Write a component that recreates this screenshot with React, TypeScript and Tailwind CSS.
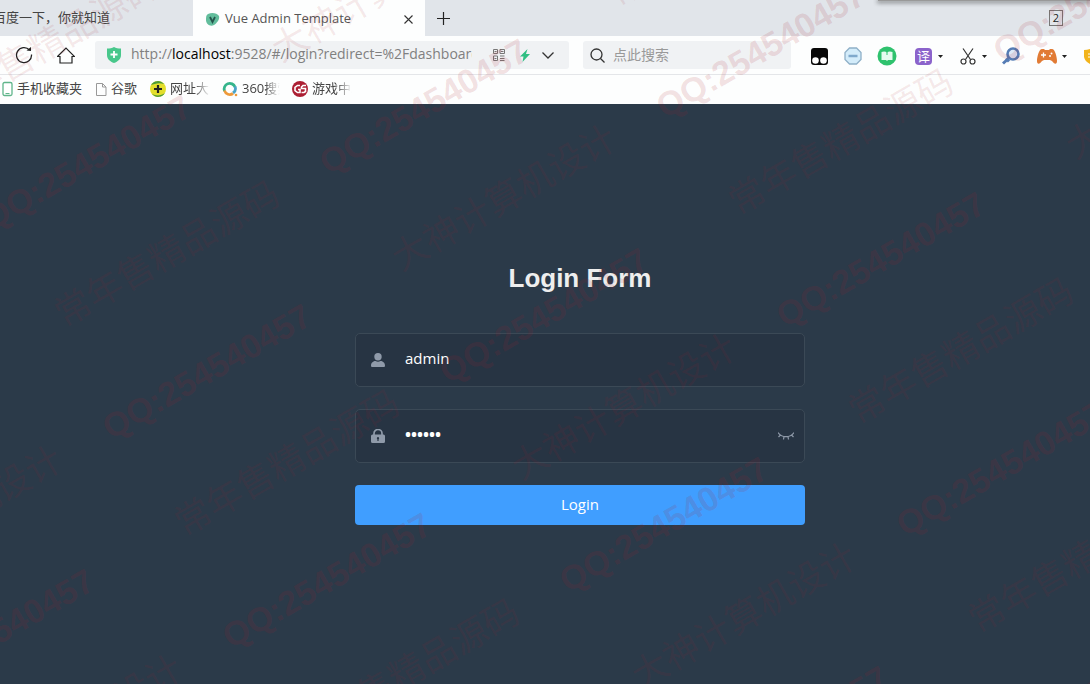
import { useState } from "react"
import type { ReactNode } from "react"

const bookmarks = [
  { label: "手机收藏夹", width: "w-[66px]", icon: <PhoneIcon /> },
  { label: "谷歌", width: "w-[27px]", icon: <PageIcon /> },
  { label: "网址大全", width: "w-10", icon: <NavSiteIcon /> },
  { label: "360搜索", width: "w-[38px]", icon: <SearchSiteIcon /> },
  { label: "游戏中心", width: "w-10", icon: <GameSiteIcon /> },
]

function PhoneIcon() {
  return (
    <svg width="11" height="16" viewBox="0 0 11 16" fill="none">
      <rect x="1" y="1.5" width="9" height="13" rx="1.5" fill="#fff" stroke="#5fb58a" strokeWidth="1.3" />
      <path d="M3.500 12.5h4" stroke="#5fb58a" />
    </svg>
  )
}

function PageIcon() {
  return (
    <svg width="12" height="16" viewBox="0 0 12 16" fill="none" stroke="#999">
      <path d="M1.5 2.5h6l3.500 3.500v8.500h-9.500zM7.500 2.500v3.500h3.500" />
    </svg>
  )
}

function NavSiteIcon() {
  return (
    <svg width="16" height="16" viewBox="0 0 16 16">
      <circle cx="8" cy="8" r="8" fill="#e3de2c" />
      <path d="M1 4a8 8 0 0 1 13-1C9 1 4 3 1 4zM2 13a8 8 0 0 0 13-1c-4 3-9 3-13 1z" fill="#4c9a3a" />
      <path d="M8 4v8M4 8h8" stroke="#222" strokeWidth="2.200" />
    </svg>
  )
}

function SearchSiteIcon() {
  return (
    <svg width="16" height="16" viewBox="0 0 16 16" fill="none" strokeWidth="2.800">
      <path d="M2.500 10A5.500 5.500 0 0 1 13 6" stroke="#35b58b" />
      <path d="M13 5.500a5.500 5.500 0 0 1-2 6.500" stroke="#4aa3c8" />
      <path d="M2.500 9.500A5.500 5.500 0 0 0 11 12.500" stroke="#ee9a3a" />
      <circle cx="14" cy="14" r="1.300" fill="#ee9a3a" />
    </svg>
  )
}

function GameSiteIcon() {
  return (
    <svg width="16" height="16" viewBox="0 0 16 16" fill="none">
      <circle cx="8" cy="8" r="8" fill="#ac1f33" />
      <path d="M8 4.500H5.500L3 6.500v3l2.500 2H8V8.500H6M14 4.500h-3L9.500 6v1.500h4v3l-1.500 1H9.500" stroke="#fff" strokeWidth="1.600" />
    </svg>
  )
}

function Caret() {
  return (
    <svg width="5" height="3" viewBox="0 0 5 3" className="shrink-0">
      <path d="M0 0h5L2.500 3z" fill="#222" />
    </svg>
  )
}

function TabBar() {
  return (
    <div className="relative flex h-9 items-stretch overflow-hidden bg-[#e1e5ea] text-[#555]">
      <button type="button" className="flex w-[193px] shrink-0 items-center overflow-hidden pl-px">
        <span className="-ml-2 whitespace-nowrap text-[13px] text-[#444]">百度一下，你就知道</span>
      </button>
      <div className="flex w-[232px] shrink-0 items-center bg-[#fdfefe] pt-0.5 pl-3">
        <svg width="15" height="15" viewBox="0 0 15 15" className="shrink-0">
          <path d="M3 2C7 0 12 1 14 4c1 3-2 7-5 9-4 2-8-1-8-5 0-3 0-5 2-6z" fill="#62bd9c" />
          <path d="M5 5l2.500 5L10 5" fill="none" stroke="#24544c" strokeWidth="1.800" />
        </svg>
        <span className="ml-[5px] flex-1 whitespace-nowrap text-left text-[13px]">Vue Admin Template</span>
        <button type="button" aria-label="Close tab" className="mr-3">
          <svg width="9" height="9" viewBox="0 0 9 9" stroke="#333" strokeWidth="1.100">
            <path d="M.5.5l8 8M8.500.5l-8 8" />
          </svg>
        </button>
      </div>
      <button type="button" aria-label="New tab" className="ml-3">
        <svg width="13" height="13" viewBox="0 0 13 13" stroke="#222" strokeWidth="1.200">
          <path d="M6.500 0v13M0 6.500h13" />
        </svg>
      </button>
      <button
        type="button"
        className="mr-[27px] ml-auto h-4 w-3.5 self-center border border-[#777] text-[11px] leading-[14px] text-[#222]"
      >
        2
      </button>
      <div className="absolute top-0 right-0 h-px w-[212px] bg-[#999] shadow-[0_1px_4px_1px_rgba(0,0,0,0.45)]" />
    </div>
  )
}

function AddressBar() {
  return (
    <div className="flex h-7 min-w-0 flex-1 items-center rounded-[3px] bg-[#f0f2f4] pl-3">
      <svg width="14" height="16" viewBox="0 0 14 16" className="shrink-0">
        <path d="M0 1.500C3 1.500 5 1 7 0c2 1 4 1.500 7 1.500V8c0 4-3 6.500-7 8-4-1.500-7-4-7-8z" fill="#48c78b" />
        <path d="M7 4v7M3.500 7.500h7" stroke="#fff" strokeWidth="1.800" />
      </svg>
      <div className="mb-0.5 ml-2.5 w-[341px] overflow-hidden whitespace-nowrap text-sm text-[#808080]">
        http://<span className="text-black">localhost</span>:9528/#/login?redirect=%2Fdashboard
      </div>
      <div className="ml-auto flex items-center pr-[15px]">
        <svg width="12" height="12" viewBox="0 0 12 12" fill="none" stroke="#777">
          <path d="M.5.5h4v4h-4zM7 .5h4.500v4H7zM.5 7h4v4.500h-4zM7 7h4.500M7 9.500h4.500M7 11.500h4.500M1.500 2.500h2M8 2.500h2.500M1.500 9.500h2" />
        </svg>
        <svg width="10" height="13" viewBox="0 0 10 13" className="ml-[15px]">
          <path d="M7.500 0L0 7.500h3.500L2.500 13 10 5H6z" fill="#2fbf83" />
        </svg>
        <svg width="12" height="7" viewBox="0 0 12 7" className="ml-3" fill="none" stroke="#333" strokeWidth="1.300">
          <path d="M.5.5L6 6l5.500-5.500" />
        </svg>
      </div>
    </div>
  )
}

function Extensions() {
  return (
    <div className="flex w-[299px] shrink-0 items-center overflow-hidden pt-0.5 pl-5">
      <svg width="17" height="17" viewBox="0 0 17 17" className="shrink-0">
        <rect width="17" height="17" rx="3" fill="#080808" />
        <circle cx="4.500" cy="12.500" r="3.300" fill="#fff" />
        <circle cx="12.500" cy="12.500" r="3.300" fill="#fff" />
      </svg>
      <svg width="18" height="18" viewBox="0 0 18 18" className="ml-4 shrink-0">
        <path d="M5.500 1h7L17 5.500v7L12.500 17h-7L1 12.500v-7z" fill="#d3ecfa" stroke="#8fb0c8" strokeWidth="1.300" />
        <path d="M4.500 9h9" stroke="#7fa9cc" strokeWidth="2.500" />
      </svg>
      <svg width="20" height="20" viewBox="0 0 20 20" className="ml-[15px] shrink-0">
        <circle cx="10" cy="10" r="9.500" fill="#2fc26e" />
        <path d="M4.500 6Q8 5 10 6.500q2-1.500 5.500-.5V14H11l-1 1-1-1H4.500z" fill="#e6fbef" />
        <path d="M10 6v3" stroke="#2fc26e" />
      </svg>
      <span className="ml-[18px] h-[17px] w-[17px] shrink-0 rounded-sm bg-[#8b63cb] text-center text-[13px] leading-4 text-white">
        译
      </span>
      <span className="ml-1.5"><Caret /></span>
      <svg width="16" height="17" viewBox="0 0 16 17" className="ml-[17px] shrink-0" fill="none" stroke="#333" strokeWidth="1.200">
        <path d="M3 .5l7.500 11M13 .5l-7.500 11" />
        <circle cx="3.500" cy="13.500" r="2.500" />
        <circle cx="12.500" cy="13.500" r="2.500" />
      </svg>
      <span className="ml-1.5"><Caret /></span>
      <svg width="18" height="18" viewBox="0 0 18 18" className="ml-[15px] shrink-0" fill="none" stroke="#557cb5">
        <circle cx="11" cy="7" r="5.500" fill="#dce8f8" strokeWidth="2.600" />
        <path d="M7 11l-6 5.500M4 11.500l3 3" strokeWidth="3" />
      </svg>
      <svg width="20" height="15" viewBox="0 0 20 15" className="ml-[17px] shrink-0">
        <path d="M5 0h2l1 1h4l1-1h2c3 0 5 8 5 12 0 4-3 3-5 0l-2-1H7l-2 1c-2 3-5 4-5 0C0 8 2 0 5 0z" fill="#e17b35" />
        <path d="M6.500 3.500v5M4 6h5" stroke="#fff" strokeWidth="1.300" />
        <circle cx="14.500" cy="4.500" r="1" fill="#fff" />
        <circle cx="13" cy="7" r="1" fill="#fff" />
      </svg>
      <span className="ml-[5px]"><Caret /></span>
      <svg width="16" height="17" viewBox="0 0 16 17" className="ml-[17px] shrink-0">
        <path d="M0 2q4 0 8-2 4 2 8 2v7q-1 5-8 8-7-3-8-8z" fill="#f2b41c" />
        <path d="M4 6h8M4 9h8" stroke="#fff" />
      </svg>
    </div>
  )
}

function Toolbar() {
  return (
    <div className="flex h-[39px] items-center border-b border-[#e4e6e9] bg-[#fdfefe]">
      <button type="button" aria-label="Reload" className="ml-[15px] shrink-0">
        <svg width="18" height="18" viewBox="0 0 18 18" fill="none" stroke="#222" strokeWidth="1.300">
          <path d="M16.500 8.500a7.500 7.500 0 1 1-2-4.500" />
          <path d="M11.500 4.500l4.500.5V1z" fill="#222" stroke="none" />
        </svg>
      </button>
      <button type="button" aria-label="Home" className="ml-6 shrink-0">
        <svg width="18" height="17" viewBox="0 0 18 17" fill="none" stroke="#222" strokeWidth="1.200">
          <path d="M.5 9.500L9 1l8.500 8.500H15v6.500H3V9.500z" />
        </svg>
      </button>
      <div className="ml-5 flex min-w-0 flex-1 gap-3.5">
        <AddressBar />
        <label className="flex h-7 w-52 shrink-0 items-center rounded-[3px] bg-[#f0f2f4] pl-[7px]">
          <svg width="15" height="15" viewBox="0 0 15 15" fill="none" stroke="#333" strokeWidth="1.300">
            <circle cx="6.500" cy="6.500" r="5.500" />
            <path d="M10.500 10.500l4 4" />
          </svg>
          <input
            aria-label="点此搜索"
            placeholder="点此搜索"
            className="ml-2 w-40 bg-transparent text-sm outline-none placeholder:text-[#999]"
          />
        </label>
      </div>
      <Extensions />
    </div>
  )
}

function Bookmarks() {
  return (
    <nav className="flex h-[29px] items-center gap-3 bg-[#fdfefe] pb-0.5 pl-0.5 text-[13px] text-[#444]">
      {bookmarks.map((b, i) => (
        <a key={b.label} href="#" className="flex items-center gap-1">
          {b.icon}
          <span
            className={`overflow-hidden whitespace-nowrap ${b.width} ${
              i > 1 ? "[mask-image:linear-gradient(to_right,#000_60%,transparent)]" : ""
            }`}
          >
            {b.label}
          </span>
        </a>
      ))}
    </nav>
  )
}

function Field({ icon, children }: { icon: ReactNode; children: ReactNode }) {
  return (
    <div className="mb-[22px] flex h-[54px] items-center rounded-[5px] border border-[#3b4956] bg-[#273443] pl-[15px] text-[#8f9aa9]">
      {icon}
      {children}
    </div>
  )
}

function LoginForm() {
  const [visible, setVisible] = useState(false)

  return (
    <form className="w-[450px]" onSubmit={(e) => e.preventDefault()}>
      <h3 className="mb-10 text-center font-['Liberation_Sans',sans-serif] text-[26px] leading-[30px] font-bold text-[#eee]">
        Login Form
      </h3>
      <Field
        icon={
          <svg width="14" height="14" viewBox="0 0 14 14" fill="currentColor">
            <circle cx="7" cy="3.700" r="3.700" />
            <path d="M0 12.500C0 9.500 2.500 8 4.500 8c1.500 1 3.500 1 5 0 2 0 4.500 1.500 4.500 4.500 0 1-.5 1.500-1.500 1.500h-11C.5 14 0 13.500 0 12.500z" />
          </svg>
        }
      >
        <input
          aria-label="Username"
          defaultValue="admin"
          className="mb-1 ml-5 min-w-0 flex-1 bg-transparent text-[15px] text-white outline-none"
        />
      </Field>
      <Field
        icon={
          <svg width="14" height="14" viewBox="0 0 14 14">
            <path d="M3 6V4.500a4 4 0 0 1 8 0V6" fill="none" stroke="currentColor" strokeWidth="1.700" />
            <path
              d="M1.500 5.500h11Q14 5.500 14 7v5.500q0 1.500-1.500 1.500h-11Q0 14 0 12.500V7q0-1.500 1.500-1.500zM7 8a1.200 1.200 0 0 0-.6 2.200V12h1.200v-1.800A1.200 1.200 0 0 0 7 8z"
              fill="currentColor"
              fillRule="evenodd"
            />
          </svg>
        }
      >
        <input
          aria-label="Password"
          type={visible ? "text" : "password"}
          defaultValue="111111"
          className="mb-1 ml-5 min-w-0 flex-1 bg-transparent text-base font-bold text-white outline-none"
        />
        <button type="button" aria-label="Show password" className="mr-2.5" onClick={() => setVisible(!visible)}>
          <svg width="16" height="8" viewBox="0 0 16 8" fill="none" stroke="currentColor" strokeWidth="1.200">
            <path d="M0 .5C4 6 12 6 16 .5M2.500 3L.5 5M13.500 3l2 2M6 4.500L5.500 7.500M10 4.500l.5 3" />
          </svg>
        </button>
      </Field>
      <button type="submit" className="h-10 w-full rounded bg-[#409eff] pb-0.5 text-[15px] text-white">
        Login
      </button>
    </form>
  )
}

const rows = [-4, -3, -2, -1, 0, 1, 2, 3]
const cols = [-2, -1, 0, 1, 2, 3]

// diagonal stamps on a skewed grid, the two slogans alternate by column
const stamps = rows
  .flatMap((i) => cols.map((j) => ({ key: `${i}:${j}`, even: j % 2 === 0, x: 120 * i + 337 * j, y: 209 * i - 56 * j })))
  .filter((s) => s.x > -700 && s.x < 800 && s.y > -320 && s.y < 700)

function Watermark() {
  return (
    <div aria-hidden="true" className="pointer-events-none absolute inset-0 overflow-hidden select-none">
      {stamps.map((s) => (
        <div key={s.key}>
          <span
            className="absolute origin-bottom-left -rotate-30 font-['Liberation_Sans',sans-serif] text-[34px] leading-7 font-bold whitespace-nowrap text-[#a81e2c]/14"
            style={{ left: s.x + 329, top: s.y + 149 }}
          >
            QQ:254540457
          </span>
          <span
            className="absolute origin-bottom-left -rotate-30 font-['Liberation_Serif','Noto_Sans_CJK_SC',serif] text-[36px] leading-9 whitespace-nowrap text-[#a81e2c]/10"
            style={{ left: s.x + 404, top: s.y + 241 }}
          >
            {s.even ? "大神计算机设计" : "常年售精品源码"}
          </span>
        </div>
      ))}
    </div>
  )
}

export default function App() {
  return (
    <div className="relative flex min-h-screen flex-col overflow-hidden bg-[#2b3a49] font-['Open_Sans','Noto_Sans_CJK_SC',sans-serif]">
      <TabBar />
      <Toolbar />
      <Bookmarks />
      <main className="flex flex-1 justify-center pt-[159px] pl-[70px]">
        <LoginForm />
      </main>
      <Watermark />
    </div>
  )
}
